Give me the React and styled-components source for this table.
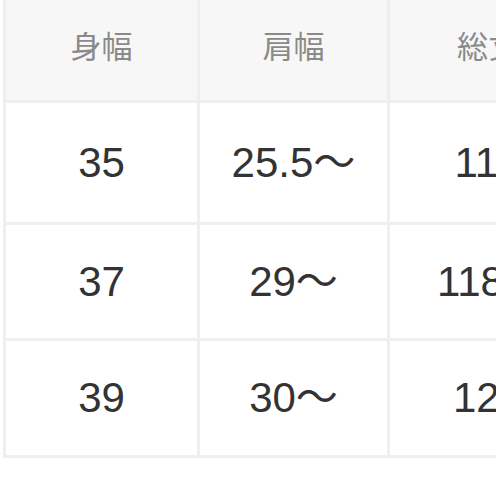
import React from "react";
import styled, { createGlobalStyle } from "styled-components";

const Global = createGlobalStyle`
  html, body { margin: 0; padding: 0; background: #ffffff; overflow: hidden; }
  body { width: 496px; height: 496px; }
`;

const Frame = styled.div`
  width: 496px;
  height: 496px;
  overflow: hidden;
`;

const Table = styled.div`
  margin-left: 3px;
  display: grid;
  grid-template-columns: 191px 187px 196px;
  grid-template-rows: 100px 119px 113px 114px;
  gap: 3px;
  width: max-content;
  background: #efefef;
  border-left: 3px solid #efefef;
  border-bottom: 3px solid #efefef;
`;

const HeadCell = styled.div`
  background: #f7f7f7;
  display: flex;
  justify-content: center;
  align-items: flex-start;
  padding-top: 27px;
  box-sizing: border-box;
  font-family: "Noto Sans CJK JP", "Noto Sans", sans-serif;
  font-size: 31px;
  color: #8a8a8a;
  line-height: 36px;
  white-space: nowrap;
`;

const Cell = styled.div`
  background: #ffffff;
  display: flex;
  justify-content: center;
  align-items: center;
  font-family: "Liberation Sans", "Noto Sans CJK JP", sans-serif;
  font-size: 42px;
  line-height: 48px;
  color: #333333;
  white-space: nowrap;
`;

const Tilde = styled.span`
  font-family: "Noto Sans CJK JP", sans-serif;
  line-height: 0;
`;

const headers = ["身幅", "肩幅", "総丈"];
const rows = [
  [["35", false], ["25.5", true], ["115", false]],
  [["37", false], ["29", true], ["118.5", false]],
  [["39", false], ["30", true], ["121", false]],
];

export default function App() {
  return (
    <Frame>
      <Global />
      <Table>
        {headers.map((h) => (
          <HeadCell key={h}>{h}</HeadCell>
        ))}
        {rows.map((r, i) =>
          r.map(([v, t], j) => (
            <Cell key={`${i}-${j}`}>
              <span>
                {v}
                {t && <Tilde>〜</Tilde>}
              </span>
            </Cell>
          ))
        )}
      </Table>
    </Frame>
  );
}
